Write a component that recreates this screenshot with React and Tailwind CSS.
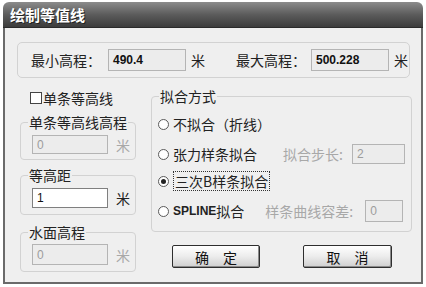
import React from 'react';

const cjk = "font-['Noto_Sans_CJK_SC','Noto_Sans',sans-serif]";
const num = "font-['Liberation_Sans',Arial,sans-serif]";

function Field({ value, width, height, enabled, bold, className = '' }) {
  return (
    <div
      className={`flex items-center pl-[4px] border ${num} text-[12px] leading-none ${
        enabled ? 'bg-white border-[#7f7f7f] text-[#111]' : 'bg-[#ececec] border-[#b4b4b4] text-[#9c9c9c]'
      } ${bold ? 'font-bold text-[#111]' : ''} ${width} ${height} ${className}`}
    >
      {value}
    </div>
  );
}

function Group({ title, className, children }) {
  return (
    <div className={`relative border border-[#d2d2d2] rounded-[4px] ${className}`}>
      <span className="absolute left-[7px] -top-[10px] px-[1px] bg-[#efefef] text-[14px] leading-[18px] text-[#222]">
        {title}
      </span>
      {children}
    </div>
  );
}

function Radio({ checked }) {
  return (
    <span className="w-[11px] h-[11px] rounded-full border border-[#5a5a5a] bg-white flex items-center justify-center shrink-0">
      {checked && <span className="w-[5px] h-[5px] rounded-full bg-[#222]" />}
    </span>
  );
}

function Button({ label, className }) {
  return (
    <div
      className={`h-[23px] flex items-center justify-center border border-[#2e2e2e] rounded-[2px] bg-gradient-to-b from-[#ffffff] via-[#ececec] to-[#cfcfcf] shadow-[inset_-1px_-1px_0_#8a8a8a] text-[14px] leading-none text-[#111] ${className}`}
    >
      {label}
    </div>
  );
}

export default function App() {
  return (
    <div className={`w-[426px] h-[287px] bg-white overflow-hidden ${cjk}`}>
      <div className="ml-[3px] mt-[2px] w-[420px] h-[282px] flex flex-col">
        {/* title bar */}
        <div className="h-[26px] shrink-0 rounded-t-[6px] bg-gradient-to-b from-[#8c8c8c] via-[#5c5c5c] to-[#3c3c3c] border-b border-[#2a2a2a] flex items-center pl-[7px]">
          <span className="text-white font-bold text-[15px] leading-none [text-shadow:1px_1px_0_#222]">绘制等值线</span>
        </div>

        <div className="flex-1 bg-[#efefef] border-x-2 border-b-2 border-[#6a6a6a] text-[#222] text-[14px] leading-none">
          {/* min / max */}
          <div className="ml-[12px] mt-[14px] w-[393px] h-[36px] border border-[#d2d2d2] rounded-[5px] flex items-center pl-[13px]">
            <span className="w-[77px]">最小高程：</span>
            <Field value="490.4" width="w-[78px]" height="h-[22px]" bold />
            <span className="ml-[5px]">米</span>
            <span className="ml-[31px] w-[75px]">最大高程：</span>
            <Field value="500.228" width="w-[78px]" height="h-[22px]" bold />
            <span className="ml-[5px]">米</span>
          </div>

          <div className="flex ml-[12px]">
            {/* left column */}
            <div className="w-[134px] flex flex-col">
              <div className="mt-[13px] h-[14px] flex items-center pl-[13px]">
                <span className="w-[12px] h-[12px] border border-[#444] bg-white mr-[1px]" />
                <span>单条等高线</span>
              </div>
              <Group title="单条等高线高程" className="ml-[3px] w-[116px] h-[38px] mt-[17px] text-[#9c9c9c]">
                <div className="flex items-center pl-[11px] pt-[12px]">
                  <Field value="0" width="w-[76px]" height="h-[19px]" />
                  <span className="ml-[8px] text-[#a8a8a8]">米</span>
                </div>
              </Group>
              <Group title="等高距" className="ml-[3px] w-[116px] h-[40px] mt-[15px]">
                <div className="flex items-center pl-[11px] pt-[12px]">
                  <Field value="1" width="w-[76px]" height="h-[20px]" enabled />
                  <span className="ml-[8px]">米</span>
                </div>
              </Group>
              <Group title="水面高程" className="ml-[3px] w-[116px] h-[40px] mt-[17px]">
                <div className="flex items-center pl-[11px] pt-[11px]">
                  <Field value="0" width="w-[76px]" height="h-[21px]" />
                  <span className="ml-[8px] text-[#a8a8a8]">米</span>
                </div>
              </Group>
            </div>

            {/* right column */}
            <div className="w-[261px] flex flex-col">
              <Group title="拟合方式" className="mt-[18px] h-[136px] pl-[6px] pt-[16px]">
                <div className="h-[22px] flex items-center">
                  <Radio />
                  <span className="ml-[4px]">不拟合（折线）</span>
                </div>
                <div className="h-[22px] mt-[8px] flex items-center">
                  <Radio />
                  <span className="ml-[4px] w-[110px]">张力样条拟合</span>
                  <span className="text-[#a8a8a8] w-[69px]">拟合步长:</span>
                  <Field value="2" width="w-[53px]" height="h-[20px]" />
                </div>
                <div className="h-[22px] mt-[5px] flex items-center">
                  <Radio checked />
                  <span className="ml-[4px] px-[1px] py-[2px] border border-dotted border-[#333]">三次B样条拟合</span>
                </div>
                <div className="h-[22px] mt-[8px] flex items-center">
                  <Radio />
                  <span className={`ml-[4px] ${num} font-bold text-[12px]`}>SPLINE</span>
                  <span className="w-[49px]">拟合</span>
                  <span className="text-[#a8a8a8] w-[100px]">样条曲线容差:</span>
                  <Field value="0" width="w-[38px]" height="h-[22px]" />
                </div>
              </Group>
              <div className="flex mt-[13px]">
                <Button label="确　定" className="ml-[21px] w-[88px]" />
                <Button label="取　消" className="ml-[43px] w-[89px]" />
              </div>
            </div>
          </div>
        </div>
      </div>
    </div>
  );
}
